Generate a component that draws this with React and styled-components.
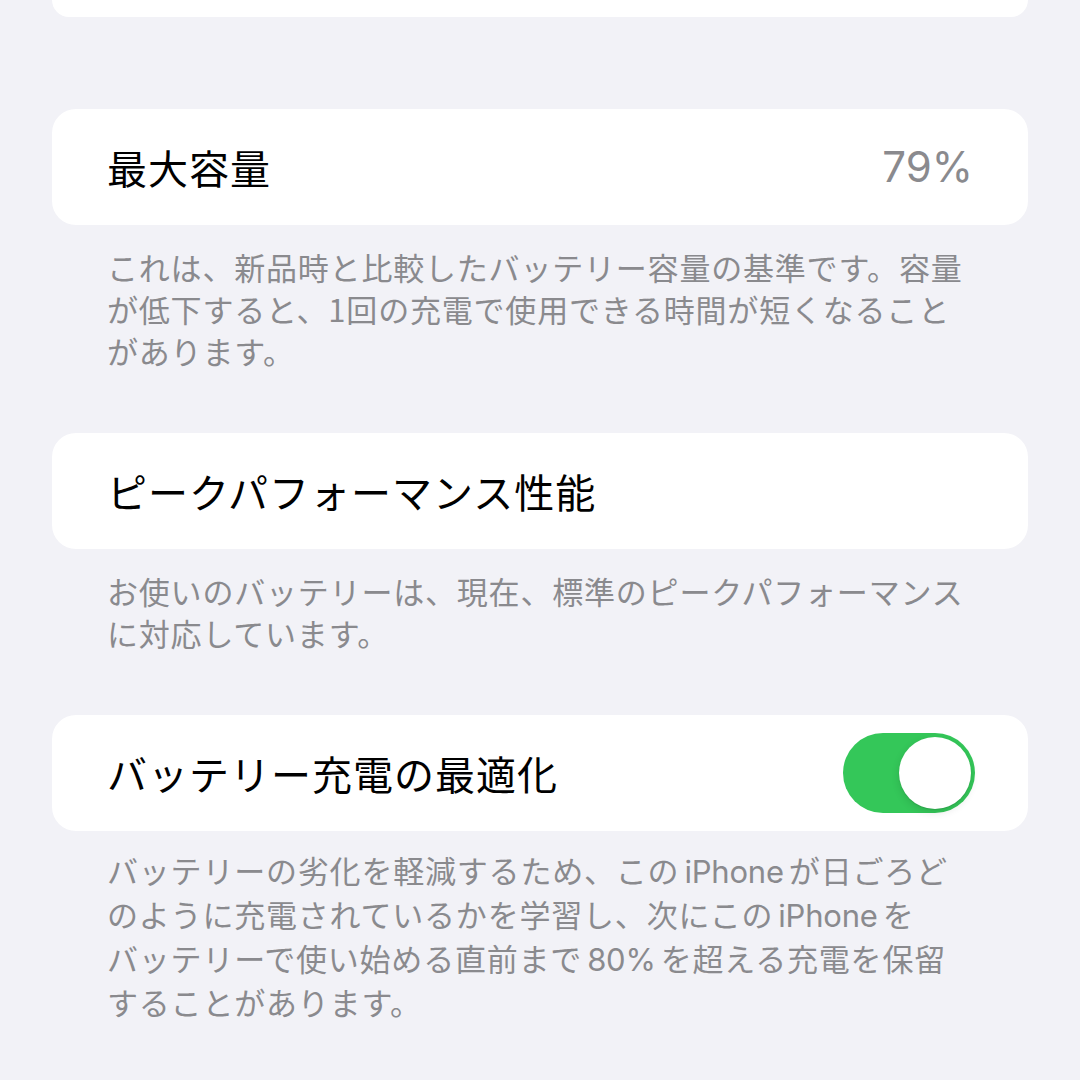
import React, { useState } from "react";
import styled, { createGlobalStyle } from "styled-components";

const GlobalStyle = createGlobalStyle`
  html, body {
    margin: 0;
    padding: 0;
    background: #f2f2f7;
  }
  body {
    font-family: "Noto Sans CJK JP", "Noto Sans", sans-serif;
    -webkit-font-smoothing: antialiased;
  }
`;

// lines are split the way the phone wraps them; {w} marks latin words
const sections = [
  {
    title: "最大容量",
    value: "79%",
    note: [
      ["これは、新品時と比較したバッテリー容量の基準です。容量"],
      ["が低下すると、1回の充電で使用できる時間が短くなること"],
      ["があります。"],
    ],
  },
  {
    title: "ピークパフォーマンス性能",
    note: [
      ["お使いのバッテリーは、現在、標準のピークパフォーマンス"],
      ["に対応しています。"],
    ],
  },
  {
    title: "バッテリー充電の最適化",
    toggle: true,
    note: [
      ["バッテリーの劣化を軽減するため、この", { w: "iPhone" }, "が日ごろど"],
      ["のように充電されているかを学習し、次にこの", { w: "iPhone" }, "を"],
      ["バッテリーで使い始める直前まで", { w: "80%" }, "を超える充電を保留"],
      ["することがあります。"],
    ],
  },
];

const App = () => {
  const [optimized, setOptimized] = useState(true);

  return (
    <Page>
      <GlobalStyle />
      <CutCard />
      <List>
        {sections.map((s, idx) => (
          <Section key={s.title}>
            <Card>
              <Title>{s.title}</Title>
              {s.value && <Value>{s.value}</Value>}
              {s.toggle && (
                <Switch
                  $on={optimized}
                  onClick={() => setOptimized(!optimized)}
                  aria-label={s.title}
                >
                  <Knob $on={optimized} />
                </Switch>
              )}
            </Card>
            <Note $last={idx === sections.length - 1}>
              {s.note.map((parts, i) => (
                <Line key={i}>
                  {parts.map((p, j) =>
                    typeof p === "string" ? (
                      <React.Fragment key={j}>{p}</React.Fragment>
                    ) : (
                      <Latin key={j}>{p.w}</Latin>
                    )
                  )}
                </Line>
              ))}
            </Note>
          </Section>
        ))}
      </List>
    </Page>
  );
};

export default App;

const Page = styled.div`
  width: 1080px;
  height: 1080px;
  overflow: hidden;
  background: #f2f2f7;
  padding: 0 52px;
  box-sizing: border-box;
`;

const CutCard = styled.div`
  height: 17px;
  background: #fff;
  border-radius: 0 0 24px 24px;
`;

const List = styled.div`
  display: flex;
  flex-direction: column;
  gap: 61px;
  margin-top: 92px;
`;

const Section = styled.div`
  display: flex;
  flex-direction: column;
`;

const Card = styled.div`
  height: 116px;
  background: #fff;
  border-radius: 24px;
  display: flex;
  align-items: center;
  justify-content: space-between;
  padding: 0 53px 0 55px;
  box-sizing: border-box;
`;

const Title = styled.div`
  font-size: 40px;
  letter-spacing: 1px;
  color: #000;
  line-height: 1;
`;

const Value = styled.div`
  font-family: Inter, "Liberation Sans", sans-serif;
  font-size: 42px;
  color: #8a8a8e;
  line-height: 1;
  margin-right: 2px;
`;

const Switch = styled.button`
  width: 132px;
  height: 80px;
  border: none;
  border-radius: 40px;
  padding: 4px;
  background: ${(p) => (p.$on ? "#34c759" : "#e9e9ea")};
  display: flex;
  justify-content: ${(p) => (p.$on ? "flex-end" : "flex-start")};
  align-items: center;
  cursor: pointer;
  box-sizing: border-box;
`;

const Knob = styled.span`
  width: 72px;
  height: 72px;
  border-radius: 50%;
  background: #fff;
  box-shadow: 0 3px 8px rgba(0, 0, 0, 0.12), 0 1px 1px rgba(0, 0, 0, 0.1);
`;

const Note = styled.div`
  padding: ${(p) => (p.$last ? "18px" : "21px")} 0 0 55px;
  font-size: 31px;
  letter-spacing: 0.8px;
  line-height: 42px;
  color: #8a8a8e;
  white-space: nowrap;
`;

const Line = styled.div``;

const Latin = styled.span`
  font-family: Inter, "Liberation Sans", sans-serif;
  letter-spacing: -0.2px;
  margin: 0 5px;
`;
